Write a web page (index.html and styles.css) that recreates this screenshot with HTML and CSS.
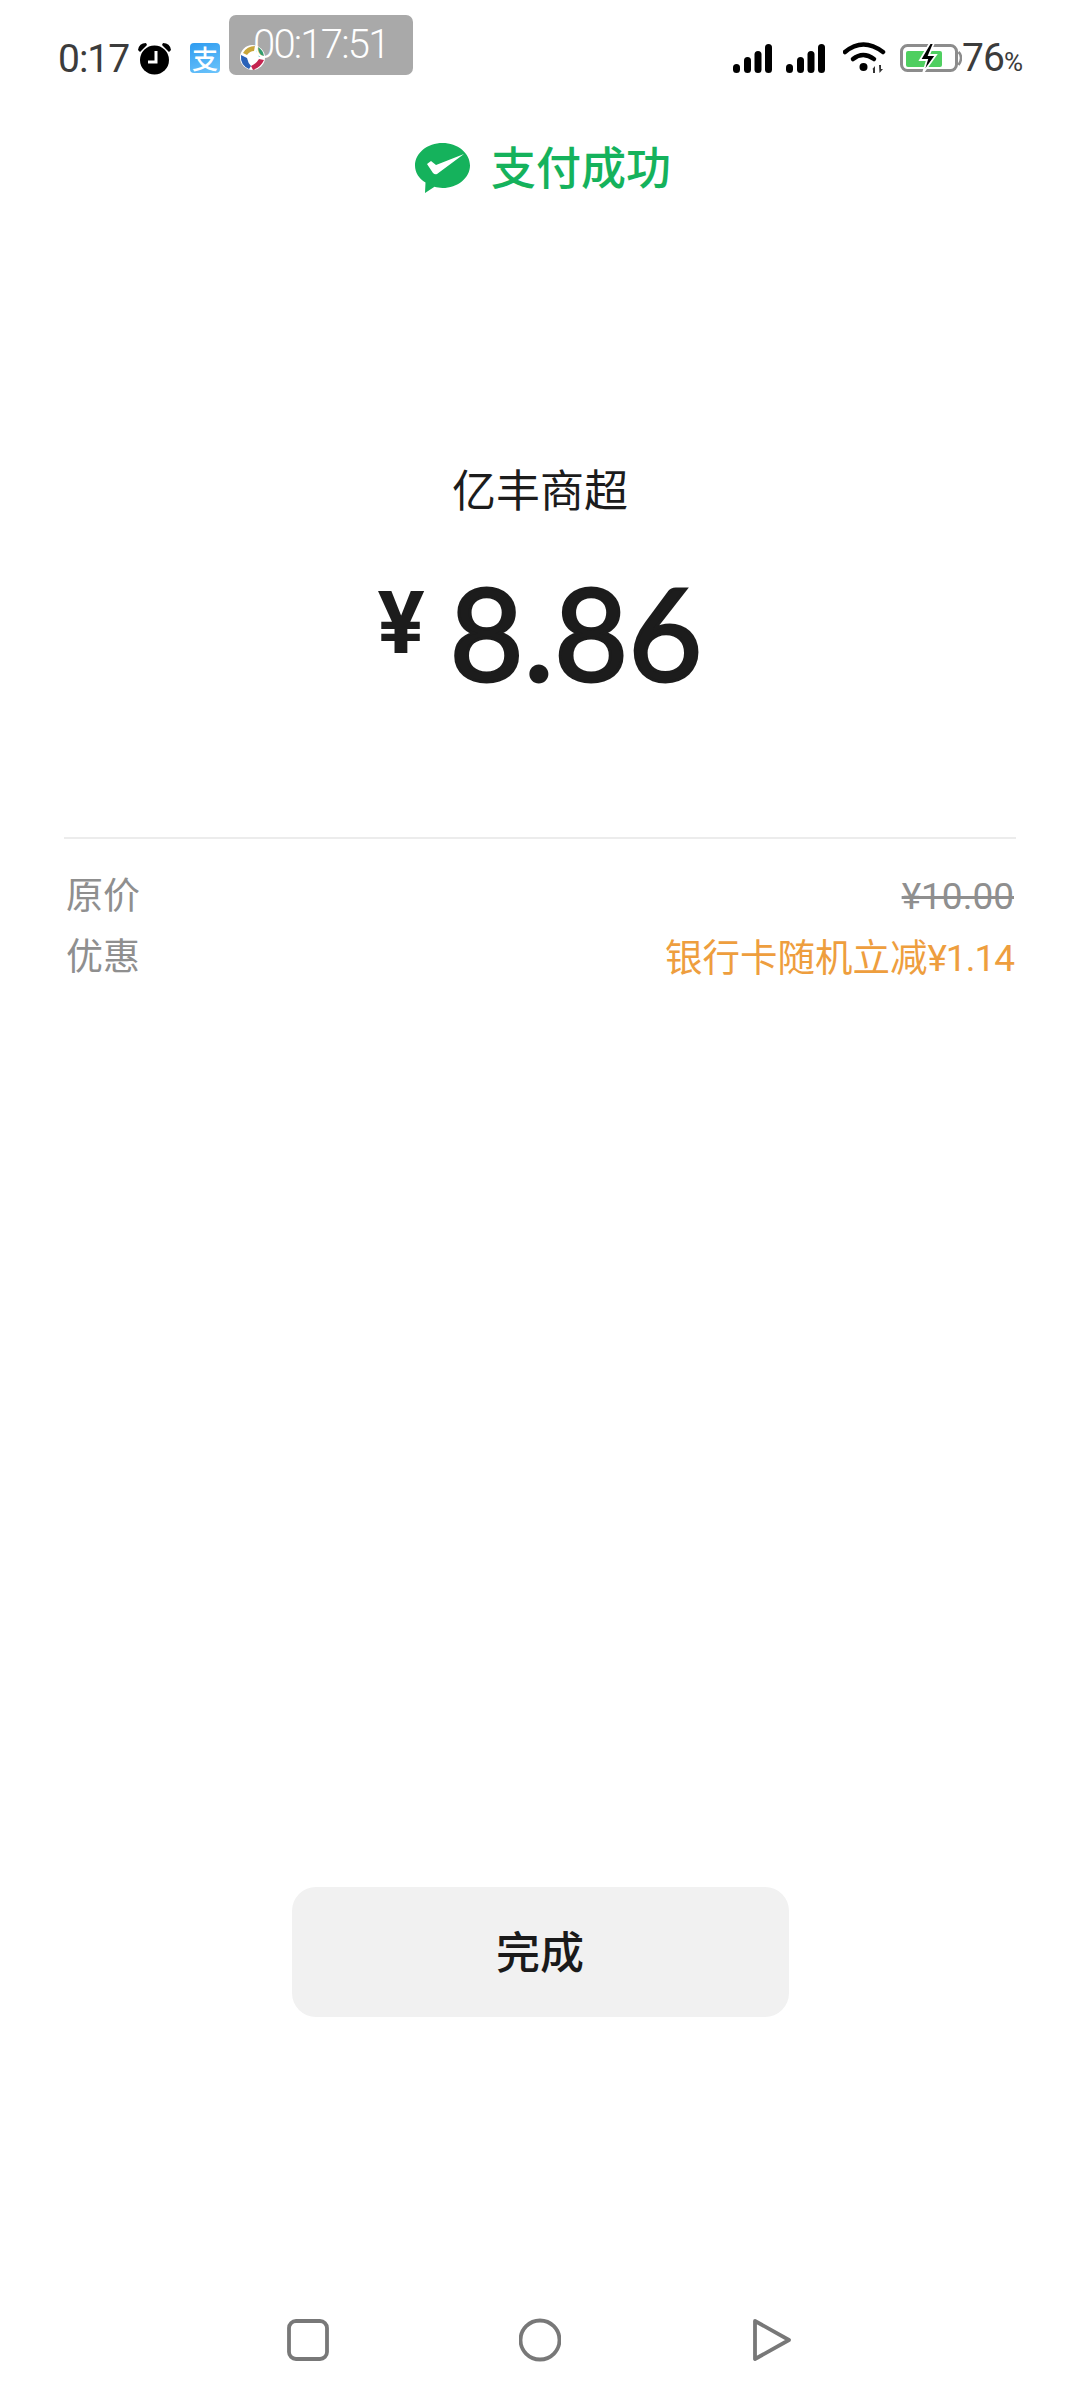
FILE: index.html
```html
<!DOCTYPE html>
<html lang="zh-CN">
<head>
<meta charset="utf-8">
<title>支付成功</title>
<link rel="stylesheet" href="styles.css">
</head>
<body>
<div class="page">
  <header class="status">
    <div class="status-left">
      <span class="clock">0:17</span>
      <svg class="alarm" viewBox="0 0 35 33"><path d="M1 8 Q2 1 9 1 L10 3 L3 10 Z M34 8 Q33 1 26 1 L25 3 L32 10 Z" fill="#000"/><circle cx="17.500" cy="18" r="14.500" fill="#000"/><path d="M19 9 V20 H11" fill="none" stroke="#fff" stroke-width="3"/></svg>
      <span class="alipay">支</span>
    </div>
    <div class="status-right">
      <svg class="signal" viewBox="0 0 39 29"><g fill="#000"><rect x="0" y="20" width="7" height="9" rx="3.500"/><rect x="11" y="13" width="7" height="16" rx="3.500"/><rect x="21.500" y="7" width="7" height="22" rx="3.500"/><rect x="32" y="0" width="7" height="29" rx="3.500"/></g></svg>
      <svg class="signal" viewBox="0 0 39 29"><g fill="#000"><rect x="0" y="20" width="7" height="9" rx="3.500"/><rect x="11" y="13" width="7" height="16" rx="3.500"/><rect x="21.500" y="7" width="7" height="22" rx="3.500"/><rect x="32" y="0" width="7" height="29" rx="3.500"/></g></svg>
      <svg class="wifi" viewBox="0 0 44 32"><path d="M2 10 Q20 -5 40 10" fill="none" stroke="#000" stroke-width="4.500" stroke-linecap="round"/><path d="M10 17 Q20 9 31 17" fill="none" stroke="#000" stroke-width="4.500" stroke-linecap="round"/><circle cx="20.500" cy="25" r="4" fill="#000"/><path d="M32 24 V31 H30 V27 L29 27.500 Z M36 23 H38 V27 L40 27 L36.500 31 Z" fill="#333"/></svg>
      <svg class="battery" viewBox="0 0 62 32"><rect x="1.500" y="3.500" width="55" height="25" rx="6" fill="none" stroke="#8c8c8c" stroke-width="3"/><path d="M58.500 10 Q61 12 61 16 Q61 20 58.500 23" fill="none" stroke="#8c8c8c" stroke-width="2.500"/><rect x="6" y="9" width="36" height="16" rx="2" fill="#4fcf60"/><path d="M30 1 L20 18 H27 L23 31 L36 13 H29 L34 1 Z" fill="#000" stroke="#fff" stroke-width="1.800"/></svg>
      <span class="percent">76<small>%</small></span>
    </div>
    <div class="timer">
      <svg class="app-dot" viewBox="0 0 25 25"><circle cx="12.500" cy="12.500" r="12.500" fill="#fff"/><path d="M3 8 Q7 1 15 1 L14 6 Q10 6 7 10 Z" fill="#c9a63a"/><path d="M18 2 Q23 5 24 11 L19 12 Q18 8 16 6 Z" fill="#2f9c6e"/><path d="M24 15 Q21 22 13 25 L11 21 Q16 19 19 14 Z" fill="#c4234f"/><path d="M1 10 L7 13 Q8 18 11 21 L9 24 Q0 20 1 10 Z" fill="#2a62b8"/></svg>
      <span class="timer-text">00:17:51</span>
    </div>
  </header>

  <div class="result">
    <svg class="wechat" viewBox="0 0 55 50"><path d="M27.500 0 C42.500 0 55 10 55 22.500 C55 35 42.500 45 27.500 45 C24.500 45 22 44.500 19.500 43.800 L10 50 L10.500 39.500 C4 35.500 0 29.500 0 22.500 C0 10 12.500 0 27.500 0 Z" fill="#15b25c"/><path d="M12 21 L16 18 L21 22 L49 11 L22 31 Q20 32 18 30 Z" fill="#fff"/></svg>
    <span class="result-text">支付成功</span>
  </div>

  <div class="merchant">亿丰商超</div>
  <div class="amount"><span class="currency">¥</span><span class="value">8.86</span></div>

  <section class="details">
    <div class="row"><span class="label">原价</span><span class="original">¥10.00</span></div>
    <div class="row"><span class="label">优惠</span><span class="discount">银行卡随机立减<span class="discount-sum">¥1.14</span></span></div>
  </section>

  <div class="actions"><button class="done" type="button">完成</button></div>

  <nav class="navbar">
    <svg class="nav-icon" viewBox="0 0 42 44"><rect x="2" y="3" width="38" height="38" rx="7" fill="none" stroke="#787878" stroke-width="3.800"/></svg>
    <svg class="nav-icon" viewBox="0 0 42 44"><circle cx="21" cy="22" r="19.500" fill="none" stroke="#787878" stroke-width="3.800"/></svg>
    <svg class="nav-icon" viewBox="0 0 42 44"><path d="M4 3 L38 22 L4 41 Z" fill="none" stroke="#787878" stroke-width="3.800" stroke-linejoin="round"/></svg>
  </nav>
</div>
</body>
</html>
```

FILE: styles.css
```css
* { box-sizing: border-box; }
html, body { margin: 0; padding: 0; background: #fff; }
body { font-family: Roboto, "Noto Sans CJK SC", sans-serif; color: #1c1c1c; }
.page { width: 1080px; height: 2400px; display: flex; flex-direction: column; align-items: center; position: relative; overflow: hidden; }

.status { width: 100%; height: 116px; flex: none; display: flex; justify-content: space-between; align-items: center; padding: 0 58px; position: relative; }
.status-left { display: flex; align-items: center; }
.clock { font-size: 39px; letter-spacing: -1px; color: #3c3c3c; line-height: 40px; width: 79px; margin-top: 2px; }
.alarm { width: 35px; height: 33px; }
.alipay { width: 30px; height: 30px; margin-left: 18px; border-radius: 4px; background: linear-gradient(160deg, #2f9cf0, #6cc4fb); color: #fff; font-size: 26px; line-height: 30px; font-weight: 500; text-align: center; font-family: "Noto Sans CJK SC", sans-serif; }
.status-right { display: flex; align-items: center; }
.signal { width: 39px; height: 29px; margin-right: 14px; }
.signal + .signal { margin-right: 18px; }
.wifi { width: 44px; height: 32px; margin-right: 13px; }
.battery { width: 62px; height: 32px; }
.percent { font-size: 39px; line-height: 40px; color: #3c3c3c; letter-spacing: -1px; margin-right: -1px; margin-top: 4px; }
.percent small { font-size: 26px; letter-spacing: 0; }
.timer { position: absolute; left: 229px; top: 15px; width: 184px; height: 60px; background: #a9a9a9; border-radius: 7px; }
.app-dot { position: absolute; left: 11px; top: 30px; width: 25px; height: 25px; }
.timer-text { position: absolute; left: 24px; top: 8px; font-size: 40px; line-height: 44px; font-weight: 300; color: #fff; letter-spacing: -1.800px; }

.result { display: flex; align-items: center; gap: 21px; margin-top: 27px; margin-left: 6px; height: 50px; flex: none; }
.wechat { width: 55px; height: 50px; }
.result-text { font-size: 45px; line-height: 50px; font-weight: 500; color: #15b25c; font-family: "Noto Sans CJK SC", sans-serif; margin-top: -5px; }

.merchant { margin-top: 265px; font-size: 44px; line-height: 60px; font-family: "Noto Sans CJK SC", sans-serif; color: #1c1c1c; }
.amount { display: flex; align-items: flex-start; justify-content: flex-start; margin-top: 53px; height: 130px; flex: none; }
.currency { flex: none; font-size: 88px; line-height: 100px; font-weight: 700; color: #1c1c1c; width: 72px; margin-top: 2px; font-family: Roboto, sans-serif; }
.value { flex: none; font-family: Lato, sans-serif; font-size: 128px; line-height: 130px; font-weight: 400; -webkit-text-stroke: 3px #1c1c1c; color: #1c1c1c; margin-top: -4px; }

.details { width: 952px; margin-top: 136px; border-top: 2px solid #ececec; padding-top: 30px; display: flex; flex-direction: column; gap: 5px; flex: none; }
.row { display: flex; justify-content: space-between; align-items: center; height: 56px; font-size: 37px; line-height: 56px; padding: 0 2px; }
.label, .original { color: #8f8f8f; }
.original { text-decoration: line-through; }
.discount { color: #ee9e3e; font-size: 37.500px; }
.discount-sum { font-size: 37px; letter-spacing: -1px; }

.actions { flex: 1; display: flex; align-items: flex-end; }
.done { width: 497px; height: 130px; margin-bottom: 383px; border: 0; border-radius: 24px; background: #f1f1f1; color: #1a1a1a; font-size: 44px; font-weight: 500; font-family: "Noto Sans CJK SC", sans-serif; padding: 0 0 4px; }

.navbar { position: absolute; left: 0; right: 0; bottom: 38px; display: flex; justify-content: center; gap: 190px; }
.nav-icon { width: 42px; height: 44px; }
```
